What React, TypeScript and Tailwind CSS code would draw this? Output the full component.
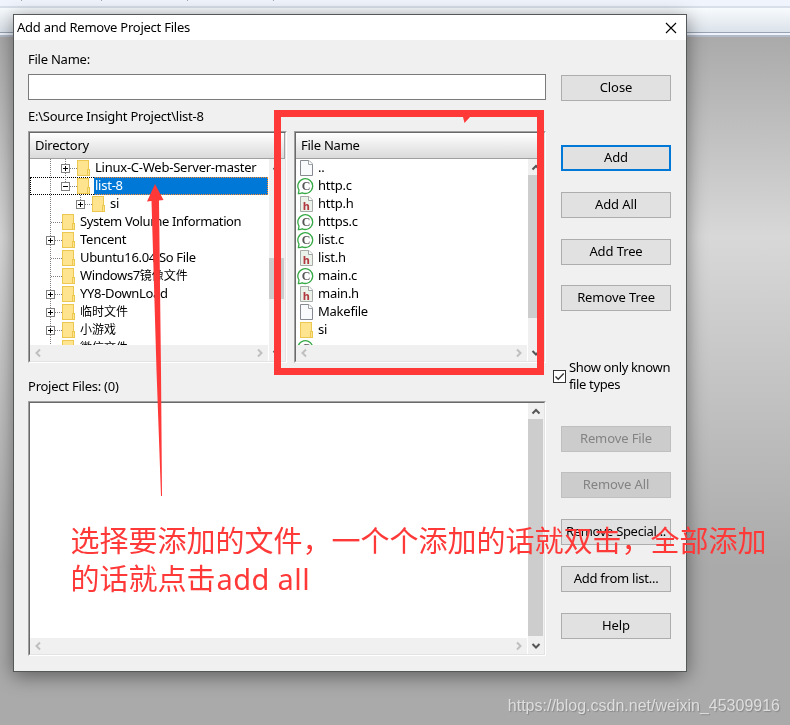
import type { ReactNode } from "react";
import clsx from "clsx";

type TreeNode = {
  name: string;
  cjk?: string;
  depth: number;
  box?: "plus" | "minus";
  selected?: boolean;
  tracking?: string;
};

const tree: TreeNode[] = [
  { name: "Linux-C-Web-Server-master", depth: 2, box: "plus" },
  { name: "list-8", depth: 2, box: "minus", selected: true },
  { name: "si", depth: 3, box: "plus" },
  { name: "System Volume Information", depth: 1, tracking: "tracking-[-0.38px]" },
  { name: "Tencent", depth: 1, box: "plus" },
  { name: "Ubuntu16.04 So File", depth: 1, tracking: "tracking-[-0.33px]" },
  { name: "Windows7", cjk: "镜像文件", depth: 1, tracking: "tracking-[-0.4px]" },
  { name: "YY8-DownLoad", depth: 1, box: "plus", tracking: "tracking-[-0.33px]" },
  { name: "", cjk: "临时文件", depth: 1, box: "plus" },
  { name: "", cjk: "小游戏", depth: 1, box: "plus" },
  { name: "", cjk: "微信文件", depth: 1 },
];

const files = [
  { name: "..", kind: "page" },
  { name: "http.c", kind: "c" },
  { name: "http.h", kind: "h" },
  { name: "https.c", kind: "c" },
  { name: "list.c", kind: "c" },
  { name: "list.h", kind: "h" },
  { name: "main.c", kind: "c" },
  { name: "main.h", kind: "h" },
  { name: "Makefile", kind: "page" },
  { name: "si", kind: "folder" },
  { name: "", kind: "c" },
];

const buttons = [
  { label: "Add", gap: "mt-[44px]", primary: true },
  { label: "Add All", gap: "mt-[21px]" },
  { label: "Add Tree", gap: "mt-[21px]" },
  { label: "Remove Tree", gap: "mt-[20px]" },
];

const lowerButtons = [
  { label: "Remove File", gap: "mt-[32px]", disabled: true },
  { label: "Remove All", gap: "mt-[20px]", disabled: true },
  { label: "Remove Special...", gap: "mt-[21px]", tracking: "tracking-[-0.33px]" },
  { label: "Add from list...", gap: "mt-[21px]", tracking: "tracking-[-0.25px]" },
  { label: "Help", gap: "mt-[21px]" },
];

function FolderShape({ x }: { x: number }) {
  return (
    <g transform={`translate(${x} 1)`}>
      <rect x="0.5" y="0.5" width="11" height="15" fill="#ffe48f" stroke="#edc851" />
      <path d="M10.5 9.5h2v6h-2z" fill="#ffe48f" stroke="#edc851" />
    </g>
  );
}

function TreeGutter({ node, index }: { node: TreeNode; index: number }) {
  const center = 20 + (node.depth - 1) * 15;
  const width = 50 + (node.depth - 1) * 15;
  const dots = { stroke: "#808080", strokeDasharray: "1 1", fill: "none" };
  return (
    <svg width={width} height="18" className="shrink-0" shapeRendering="crispEdges">
      <path d="M20.5 0V18" {...dots} />
      {node.depth === 2 && <path d={index === 0 ? "M35.5 0V18" : "M35.5 0V9"} {...dots} />}
      {node.depth === 3 && <path d="M50.5 0V9" {...dots} />}
      <path d={`M${center + 1} 9.5H${center + 12}`} {...dots} />
      {node.box && (
        <g>
          <rect x={center - 3.5} y="5.5" width="8" height="8" fill="#fff" stroke="#808080" />
          <path d={`M${center - 2} 9.5h5`} stroke="#000" />
          {node.box === "plus" && <path d={`M${center + 0.5} 7v5`} stroke="#000" />}
        </g>
      )}
      <FolderShape x={center + 12} />
    </svg>
  );
}

function FileIcon({ kind }: { kind: string }) {
  if (kind === "c") {
    return (
      <svg width="22" height="18" className="shrink-0">
        <path
          d="M2.4 16.6L3 13A7.4 7.4 0 1 1 6.2 15.8Q4.6 16.7 2.4 16.6Z"
          fill="#fff"
          stroke="#35a943"
          strokeWidth="1.3"
        />
        <text x="10" y="13.2" textAnchor="middle" fontSize="12" fontWeight="700" fontFamily="Liberation Serif, serif" fill="#555">
          C
        </text>
      </svg>
    );
  }
  if (kind === "folder") {
    return (
      <svg width="22" height="18" className="shrink-0" shapeRendering="crispEdges">
        <FolderShape x={4} />
      </svg>
    );
  }
  return (
    <svg width="22" height="18" className="shrink-0">
      <path
        d="M4.5 1.5H13L16.5 5V16.5H4.5Z"
        fill={kind === "h" ? "#eaf2ea" : "#f8fafc"}
        stroke={kind === "h" ? "#a8aca8" : "#858b90"}
      />
      <path d="M12.5 1.5V5.5H16.5" fill="#fff" stroke="#a0a5a8" />
      {kind === "h" && (
        <text x="10.2" y="15" textAnchor="middle" fontSize="10" fontWeight="700" fontFamily="DejaVu Sans, sans-serif" fill="#b03a40">
          h
        </text>
      )}
    </svg>
  );
}

function Arrow({ dir, muted }: { dir: "left" | "right" | "up" | "down"; muted?: boolean }) {
  const paths = {
    left: "M10 4.5L6.5 8L10 11.5",
    right: "M6 4.5L9.5 8L6 11.5",
    up: "M4.5 10.5L8 7L11.5 10.5",
    down: "M4.5 6L8 9.5L11.5 6",
  };
  return (
    <svg width="16" height="16" className="shrink-0">
      <path d={paths[dir]} fill="none" stroke={muted ? "#bfbfbf" : "#555"} strokeWidth="2" />
    </svg>
  );
}

function Pane({
  className,
  title,
  thumb,
  children,
}: {
  className: string;
  title?: string;
  thumb: string;
  children?: ReactNode;
}) {
  return (
    <div className={clsx("border border-t-[#a0a0a0] border-l-[#a0a0a0] border-r-white border-b-white", className)}>
      <div className="flex h-full flex-col border border-t-[#696969] border-l-[#696969] border-r-[#e3e3e3] border-b-[#e3e3e3] bg-white">
        {title && (
          <div className="flex h-[26px] shrink-0 items-center border-r border-b border-[#a0a0a0] bg-linear-to-b from-white to-[#dadada] pb-px pl-[5px]">
            {title}
          </div>
        )}
        <div className="flex min-h-0 flex-1">
          <div className="flex min-w-0 flex-1 flex-col pr-px">
            <div className="min-h-0 flex-1 overflow-hidden">{children}</div>
            <div className="flex h-4 shrink-0 justify-between bg-[#f0f0f0]">
              <Arrow dir="left" muted />
              <Arrow dir="right" muted />
            </div>
          </div>
          <div className="flex w-4 flex-col bg-[#f0f0f0]">
            <Arrow dir="up" />
            <div className="flex-1">
              <div className={clsx("w-[15px] bg-[#cdcdcd]", thumb)} />
            </div>
            <Arrow dir="down" />
          </div>
        </div>
      </div>
    </div>
  );
}

function Button({
  label,
  gap,
  primary,
  disabled,
  tracking = "tracking-[-0.1px]",
}: {
  label: string;
  gap?: string;
  primary?: boolean;
  disabled?: boolean;
  tracking?: string;
}) {
  return (
    <button
      disabled={disabled}
      className={clsx(
        "flex h-[26px] w-[110px] shrink-0 items-center justify-center pb-[2px] whitespace-nowrap",
        gap,
        tracking,
        primary ? "border-2 border-[#0078d7]" : "border",
        !primary && (disabled ? "border-[#bfbfbf]" : "border-[#adadad]"),
        disabled ? "bg-[#cccccc] text-[#838383]" : "bg-[#e1e1e1]"
      )}
    >
      {label}
    </button>
  );
}

function Dialog() {
  return (
    <div className="absolute top-[14px] left-[13px] flex h-[658px] w-[674px] flex-col border border-[#555858] bg-[#f0f0f0] tracking-[-0.24px] shadow-[0_4px_18px_0_rgba(0,0,0,0.45)]">
      <div className="flex h-[25px] shrink-0 items-center justify-between bg-white pr-[9px] pl-[3px]">
        <span className="pb-[2px]">Add and Remove Project Files</span>
        <svg width="12" height="12">
          <path d="M1 1L11 11M11 1L1 11" stroke="#000" strokeWidth="1.1" />
        </svg>
      </div>
      <div className="flex flex-1 pl-[14px]">
        <div className="flex w-[518px] flex-col pt-[11px]">
          <div className="h-[18px]">File Name:</div>
          <input className="mt-[5px] h-[26px] border border-[#7a7a7a] bg-white" />
          <div className="mt-2 h-[18px]">E:\Source Insight Project\list-8</div>
          <div className="mt-[5px] flex h-[232px] gap-[7px]">
            <Pane className="w-[259px]" title="Directory" thumb="mt-[83px] h-[41px]">
              {tree.map((node, i) => (
                <div key={i} className="relative flex h-[18px] whitespace-nowrap">
                  <TreeGutter node={node} index={i} />
                  <span
                    className={clsx(
                      node.tracking,
                      node.selected && "-ml-px flex-1 bg-[#0078d7] pl-px text-white"
                    )}
                  >
                    {node.name}
                    {node.cjk && <span className="text-[12px] tracking-normal">{node.cjk}</span>}
                  </span>
                  {node.selected && (
                    <div className="absolute inset-0 border border-dotted border-white mix-blend-difference" />
                  )}
                </div>
              ))}
            </Pane>
            <Pane className="w-[252px]" title="File Name" thumb="h-[143px]">
              {files.map((file, i) => (
                <div key={i} className="flex h-[18px]">
                  <FileIcon kind={file.kind} />
                  {file.name}
                </div>
              ))}
            </Pane>
          </div>
          <div className="mt-[15px] h-[18px]">Project Files: (0)</div>
          <Pane className="mt-[5px] h-[255px]" thumb="h-[217px]" />
        </div>
        <div className="flex flex-col pt-[35px] pl-[7px]">
          <div className="flex flex-col pl-2">
            <Button label="Close" />
            {buttons.map((b) => (
              <Button key={b.label} {...b} />
            ))}
          </div>
          <label className="mt-[48px] flex h-[35px] items-center gap-[3px] leading-[17px]">
            <svg width="13" height="13" className="shrink-0">
              <rect x="0.5" y="0.5" width="12" height="12" fill="#fff" stroke="#333" />
              <path d="M2.5 6.5L5.2 9.3L10.7 3.5" fill="none" stroke="#333" strokeWidth="1.3" />
            </svg>
            <span className="pb-[2px] tracking-[-0.36px] whitespace-nowrap">
              Show only known
              <br />
              file types
            </span>
          </label>
          <div className="flex flex-col pl-2">
            {lowerButtons.map((b) => (
              <Button key={b.label} {...b} />
            ))}
          </div>
        </div>
      </div>
    </div>
  );
}

function Annotations() {
  return (
    <div className="pointer-events-none absolute inset-0 text-[#ff3838]">
      <svg width="790" height="725" className="absolute inset-0" fill="currentColor">
        <rect x="277.5" y="113.5" width="263" height="258" fill="none" stroke="currentColor" strokeWidth="7" />
        <path d="M463 117H470L464.5 123Z" />
        <path d="M155 184L163.5 200L159 200.5L161 370L162 496H161L156.5 370L151.5 201L147 201.5Z" />
      </svg>
      <p className="absolute top-[522px] left-[70.5px] text-[29px] leading-[38px] whitespace-nowrap">
        选择要添加的文件，一个个添加的话就双击，全部添加
        <br />
        的话就点击<span className="ml-px tracking-[0.4px]">add all</span>
      </p>
    </div>
  );
}

export default function App() {
  return (
    <main className="relative flex h-[725px] w-[790px] flex-col overflow-hidden font-['Noto_Sans','Noto_Sans_CJK_SC',sans-serif] text-[13px] leading-[16px] text-black">
      <div className="flex h-[6px] shrink-0 bg-[#f0f5fd]">
        <div className="h-px w-[22px] border-r border-[#a0a5ad]" />
        <div className="h-px w-[80px] border-r border-[#a0a5ad]" />
        <div className="h-px w-[86px] border-r border-[#a0a5ad]" />
        <div className="h-px w-[86px] border-r border-[#a0a5ad]" />
      </div>
      <div className="h-[2px] shrink-0 bg-[#d8dfe8]" />
      <div className="h-[24px] shrink-0 bg-linear-to-b from-[#f8fbfd] to-[#dbe2ea]" />
      <div className="h-[5px] shrink-0 border-t border-b-2 border-t-[#98a2b2] border-b-[#b2bac8] bg-[#edf2fb]" />
      <div className="flex-1 bg-[linear-gradient(to_bottom,#aaaaaa_0px,#d8d8d8_200px,#aaaaaa_530px)]" />
      <Dialog />
      <Annotations />
      <div className="absolute right-[10px] bottom-[8px] font-['Liberation_Sans',sans-serif] text-[16px] leading-[22px] text-[#dedede] [text-shadow:1px_1px_1px_#888]">
        https://blog.csdn.net/weixin_45309916
      </div>
    </main>
  );
}
